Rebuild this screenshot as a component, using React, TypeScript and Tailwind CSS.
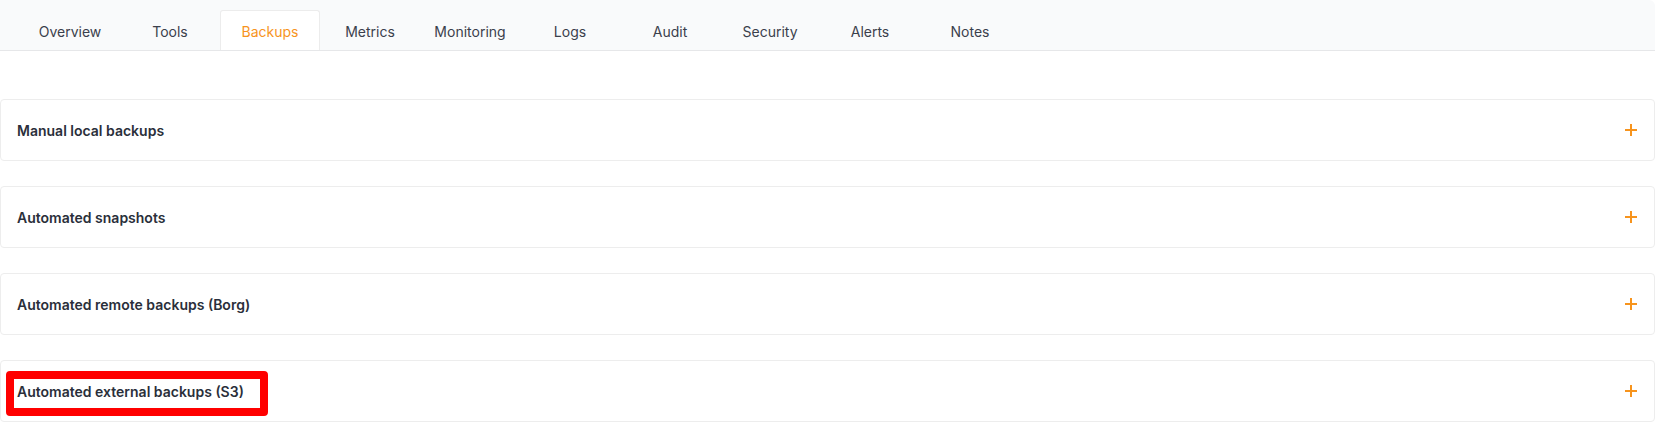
const TABS = [
  'Overview',
  'Tools',
  'Backups',
  'Metrics',
  'Monitoring',
  'Logs',
  'Audit',
  'Security',
  'Alerts',
  'Notes',
]

const SECTIONS = [
  { id: 'manual', title: 'Manual local backups' },
  { id: 'snapshots', title: 'Automated snapshots' },
  { id: 'borg', title: 'Automated remote backups (Borg)' },
  { id: 's3', title: 'Automated external backups (S3)', marked: true },
]

function PlusIcon() {
  return (
    <svg width="12" height="12" viewBox="0 0 12 12" className="shrink-0">
      <path d="M6 0v12M0 6h12" stroke="#f7941d" strokeWidth="2" />
    </svg>
  )
}

export default function App() {
  return (
    <div className="min-h-[427px] w-[1655px] bg-white font-['Inter',sans-serif]">
      <nav className="flex h-[51px] items-end rounded-tr-md border-b border-[#e6e7e9] bg-[#f9fafb] pl-[20px]">
        {TABS.map((tab) => (
          <button
            key={tab}
            type="button"
            className={
              tab === 'Backups'
                ? 'flex h-[40px] w-[100px] items-center justify-center rounded-t-[3px] border border-b-0 border-[#ececec] bg-white pt-[2px] text-[14px] text-[#f7941d]'
                : 'flex h-[40px] w-[100px] items-center justify-center pt-[2px] text-[14px] text-[#3b404c]'
            }
          >
            {tab}
          </button>
        ))}
      </nav>

      <div className="flex flex-col gap-[25px] pt-[48px]">
        {SECTIONS.map((s) => (
          <div
            key={s.id}
            className="relative flex h-[62px] items-center justify-between rounded-[4px] border border-[#ededed] bg-white pl-[16px] pr-[17px]"
          >
            <span className="text-[14px] font-semibold text-[#2a2f3a]">{s.title}</span>
            <PlusIcon />
            {s.marked && (
              <div className="absolute left-[5px] top-[10px] h-[45px] w-[262px] rounded-[4px] border-[8px] border-[#ff0000]" />
            )}
          </div>
        ))}
      </div>
    </div>
  )
}
